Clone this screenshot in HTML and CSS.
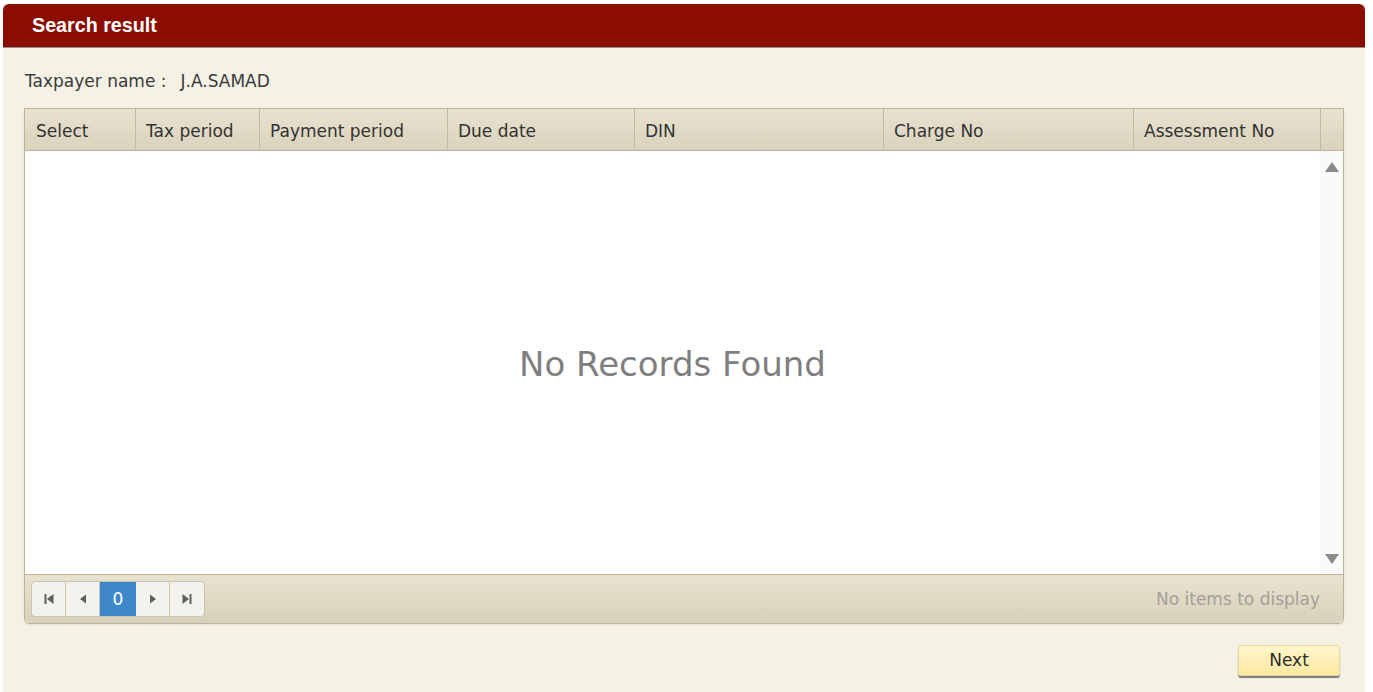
FILE: index.html
```html
<!DOCTYPE html>
<html>
<head>
<meta charset="utf-8">
<title>Search result</title>
<link rel="stylesheet" href="styles.css">
</head>
<body>
<div class="panel">
  <div class="panel-header">Search result</div>
  <div class="panel-body">
    <div class="taxpayer"><span class="taxpayer-label">Taxpayer name :</span><span class="taxpayer-name">J.A.SAMAD</span></div>
    <div class="grid">
      <div class="grid-head">
        <div class="th">Select</div>
        <div class="th">Tax period</div>
        <div class="th">Payment period</div>
        <div class="th">Due date</div>
        <div class="th">DIN</div>
        <div class="th">Charge No</div>
        <div class="th">Assessment No</div>
        <div class="th th-scroll"></div>
      </div>
      <div class="grid-content">
        <div class="grid-empty">No Records Found</div>
        <div class="scrollbar">
          <span class="arrow-up"></span>
          <span class="arrow-down"></span>
        </div>
      </div>
      <div class="pager">
        <div class="pager-buttons">
          <span class="pbtn"><svg width="12" height="12" viewBox="0 0 12 12"><rect x="1.5" y="1" width="2" height="10" fill="#5e5e5e"/><polygon points="10.5,1 10.5,11 4,6" fill="#5e5e5e"/></svg></span>
          <span class="pbtn"><svg width="12" height="12" viewBox="0 0 12 12"><polygon points="9,1.5 9,10.5 3,6" fill="#5e5e5e"/></svg></span>
          <span class="pbtn pbtn-active">0</span>
          <span class="pbtn"><svg width="12" height="12" viewBox="0 0 12 12"><polygon points="3,1.5 3,10.5 9,6" fill="#5e5e5e"/></svg></span>
          <span class="pbtn"><svg width="12" height="12" viewBox="0 0 12 12"><polygon points="1.5,1 1.5,11 8,6" fill="#5e5e5e"/><rect x="8.5" y="1" width="2" height="10" fill="#5e5e5e"/></svg></span>
        </div>
        <div class="pager-info">No items to display</div>
      </div>
    </div>
    <div class="actions">
      <button class="btn-next">Next</button>
    </div>
  </div>
</div>
</body>
</html>
```

FILE: styles.css
```css
html, body {
  margin: 0;
  padding: 0;
  background: #ffffff;
}

body {
  font-family: "DejaVu Sans", Verdana, sans-serif;
  color: #333333;
}

.panel {
  margin: 4px 8px 0 3px;
  height: 688px;
  background: #f5f1e5;
  display: flex;
  flex-direction: column;
}

.panel-header {
  height: 43px;
  line-height: 42px;
  background: #8b0d00;
  border-radius: 6px 6px 0 0;
  border-bottom: 1px solid #8f8f8f;
  color: #ffffff;
  font-family: "Liberation Sans", Arial, sans-serif;
  font-weight: bold;
  font-size: 19.7px;
  padding-left: 29px;
}

.panel-body {
  padding: 21px 21px 0 21px;
  display: flex;
  flex-direction: column;
}

.taxpayer {
  font-size: 17px;
  line-height: 24px;
  padding-left: 1px;
  margin-bottom: 15px;
  color: #3a3a3a;
  white-space: nowrap;
}

.taxpayer-name {
  margin-left: 14px;
}

.grid {
  border: 1px solid #bcb398;
  border-radius: 0 0 5px 5px;
  background: #ffffff;
  display: flex;
  flex-direction: column;
  box-shadow: 0 1px 2px rgba(0,0,0,0.08);
}

.grid-head {
  display: grid;
  grid-template-columns: 111px 124px 188px 187px 249px 250px 187px 1fr;
  grid-template-rows: 41px;
  height: 41px;
  border-bottom: 1px solid #bcb398;
  background: linear-gradient(#e8e2d0, #d9d2bc);
}

.th {
  box-sizing: border-box;
  height: 41px;
  border-right: 1px solid #c2b9a0;
  padding: 2px 0 0 10px;
  display: flex;
  align-items: center;
  font-size: 17px;
  color: #333333;
  white-space: nowrap;
}

.th:first-child {
  padding-left: 11px;
}

.th-scroll {
  border-right: none;
  padding: 0;
}

.grid-content {
  height: 423px;
  display: flex;
}

.grid-empty {
  flex: 1;
  display: flex;
  align-items: center;
  justify-content: center;
  font-size: 34px;
  color: #7f7f7f;
  padding-top: 2px;
}

.scrollbar {
  width: 23px;
  background: #fafafa;
  display: flex;
  flex-direction: column;
  justify-content: space-between;
  align-items: center;
  padding: 11px 0 10px 0;
}

.arrow-up {
  width: 0;
  height: 0;
  border-left: 7px solid transparent;
  border-right: 7px solid transparent;
  border-bottom: 10px solid #8a8a8a;
}

.arrow-down {
  width: 0;
  height: 0;
  border-left: 7px solid transparent;
  border-right: 7px solid transparent;
  border-top: 10px solid #8a8a8a;
}

.pager {
  height: 48px;
  border-top: 1px solid #bcb398;
  border-radius: 0 0 5px 5px;
  background: linear-gradient(#e8e2d0, #d8d0b9);
  display: flex;
  align-items: center;
  justify-content: space-between;
  padding: 0 23px 0 6px;
}

.pager-buttons {
  display: flex;
  height: 34px;
  border: 1px solid #cbc3ac;
  border-radius: 4px;
  background: #f4f2ec;
  overflow: hidden;
}

.pbtn {
  width: 33px;
  display: flex;
  align-items: center;
  justify-content: center;
  border-right: 1px solid #cbc3ac;
  font-size: 17px;
  color: #333333;
}

.pbtn:last-child {
  border-right: none;
  width: 34px;
}

.pbtn-active {
  background: #3e87c9;
  color: #ffffff;
  width: 36px;
  border-right: none;
}

.pager-info {
  font-size: 17px;
  color: #a3a09a;
}

.actions {
  display: flex;
  justify-content: flex-end;
  padding: 21px 4px 0 0;
}

.btn-next {
  width: 102px;
  height: 31px;
  border: 1px solid #e8d89a;
  border-radius: 3px;
  background: linear-gradient(#fff6cc, #fde89f);
  box-shadow: 0 2px 1px #7a7a7a;
  font-family: "DejaVu Sans", Verdana, sans-serif;
  font-size: 17px;
  color: #2c2c2c;
  padding: 0 0 2px 0;
}
```
